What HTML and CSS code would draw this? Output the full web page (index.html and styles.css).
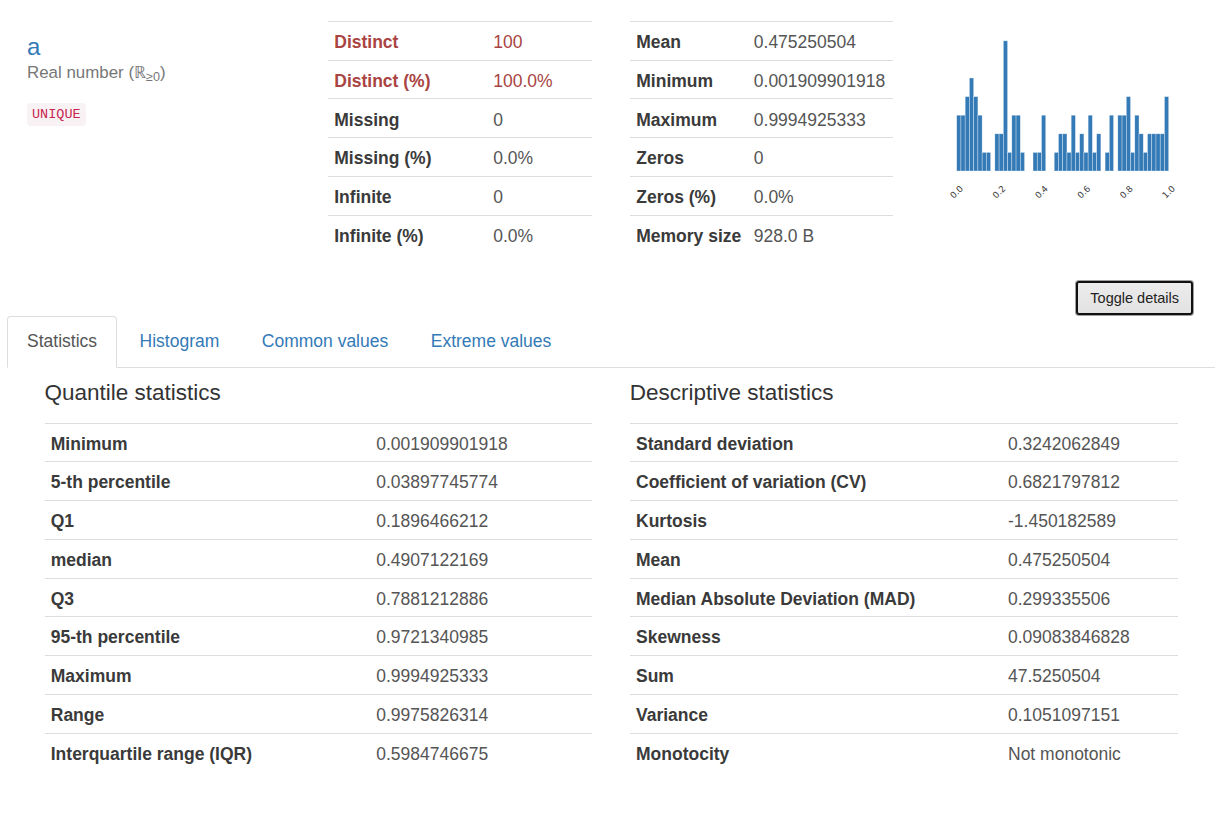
FILE: index.html
```html
<!DOCTYPE html>
<html lang="en">
<head>
<meta charset="utf-8">
<title>Variable a</title>
<link rel="stylesheet" href="styles.css">
</head>
<body>
<div class="overview">
  <div class="var-name">
    <p class="var-title"><a href="#">a</a></p>
    <p class="var-type">Real number (ℝ<sub>≥0</sub>)</p>
    <code class="badge-unique">UNIQUE</code>
  </div>
  <table class="stats t1">
    <tr class="alert"><th>Distinct</th><td>100</td></tr>
    <tr class="alert"><th>Distinct (%)</th><td>100.0%</td></tr>
    <tr><th>Missing</th><td>0</td></tr>
    <tr><th>Missing (%)</th><td>0.0%</td></tr>
    <tr><th>Infinite</th><td>0</td></tr>
    <tr><th>Infinite (%)</th><td>0.0%</td></tr>
  </table>
  <table class="stats t2">
    <tr><th>Mean</th><td>0.475250504</td></tr>
    <tr><th>Minimum</th><td>0.001909901918</td></tr>
    <tr><th>Maximum</th><td>0.9994925333</td></tr>
    <tr><th>Zeros</th><td>0</td></tr>
    <tr><th>Zeros (%)</th><td>0.0%</td></tr>
    <tr><th>Memory size</th><td>928.0 B</td></tr>
  </table>
  <svg class="mini-hist" width="260" height="180" viewBox="0 0 260 180">
    <g fill="#337ab7" stroke="#ffffff" stroke-opacity="0.55" stroke-width="0.6">
      <rect x="26.70" y="85.2" width="4.24" height="55.8"/>
      <rect x="30.94" y="85.2" width="4.24" height="55.8"/>
      <rect x="35.18" y="66.6" width="4.24" height="74.4"/>
      <rect x="39.42" y="48" width="4.24" height="93"/>
      <rect x="43.66" y="66.6" width="4.24" height="74.4"/>
      <rect x="47.90" y="85.2" width="4.24" height="55.8"/>
      <rect x="52.14" y="122.4" width="4.24" height="18.6"/>
      <rect x="56.38" y="122.4" width="4.24" height="18.6"/>
      <rect x="64.86" y="103.8" width="4.24" height="37.2"/>
      <rect x="69.10" y="103.8" width="4.24" height="37.2"/>
      <rect x="73.34" y="10.8" width="4.24" height="130.2"/>
      <rect x="77.58" y="122.4" width="4.24" height="18.6"/>
      <rect x="81.82" y="85.2" width="4.24" height="55.8"/>
      <rect x="86.06" y="85.2" width="4.24" height="55.8"/>
      <rect x="90.30" y="122.4" width="4.24" height="18.6"/>
      <rect x="103.02" y="122.4" width="4.24" height="18.6"/>
      <rect x="107.26" y="122.4" width="4.24" height="18.6"/>
      <rect x="111.50" y="85.2" width="4.24" height="55.8"/>
      <rect x="124.22" y="122.4" width="4.24" height="18.6"/>
      <rect x="128.46" y="103.8" width="4.24" height="37.2"/>
      <rect x="132.70" y="103.8" width="4.24" height="37.2"/>
      <rect x="136.94" y="122.4" width="4.24" height="18.6"/>
      <rect x="141.18" y="85.2" width="4.24" height="55.8"/>
      <rect x="145.42" y="122.4" width="4.24" height="18.6"/>
      <rect x="149.66" y="103.8" width="4.24" height="37.2"/>
      <rect x="153.90" y="122.4" width="4.24" height="18.6"/>
      <rect x="158.14" y="85.2" width="4.24" height="55.8"/>
      <rect x="162.38" y="122.4" width="4.24" height="18.6"/>
      <rect x="166.62" y="103.8" width="4.24" height="37.2"/>
      <rect x="175.10" y="122.4" width="4.24" height="18.6"/>
      <rect x="179.34" y="85.2" width="4.24" height="55.8"/>
      <rect x="187.82" y="85.2" width="4.24" height="55.8"/>
      <rect x="192.06" y="85.2" width="4.24" height="55.8"/>
      <rect x="196.30" y="66.6" width="4.24" height="74.4"/>
      <rect x="200.54" y="122.4" width="4.24" height="18.6"/>
      <rect x="204.78" y="85.2" width="4.24" height="55.8"/>
      <rect x="209.02" y="103.8" width="4.24" height="37.2"/>
      <rect x="213.26" y="122.4" width="4.24" height="18.6"/>
      <rect x="217.50" y="103.8" width="4.24" height="37.2"/>
      <rect x="221.74" y="103.8" width="4.24" height="37.2"/>
      <rect x="225.98" y="103.8" width="4.24" height="37.2"/>
      <rect x="230.22" y="103.8" width="4.24" height="37.2"/>
      <rect x="234.46" y="66.6" width="4.24" height="74.4"/>
    </g>
    <g class="axis-labels" fill="#3a3a3a" font-family="DejaVu Sans, sans-serif" font-size="8.8" text-anchor="middle">
      <text x="26.7" y="165" transform="rotate(-45 26.7 162)">0.0</text>
      <text x="69.1" y="165" transform="rotate(-45 69.1 162)">0.2</text>
      <text x="111.5" y="165" transform="rotate(-45 111.5 162)">0.4</text>
      <text x="153.9" y="165" transform="rotate(-45 153.9 162)">0.6</text>
      <text x="196.3" y="165" transform="rotate(-45 196.3 162)">0.8</text>
      <text x="238.7" y="165" transform="rotate(-45 238.7 162)">1.0</text>
    </g>
  </svg>
</div>

<div class="toggle-row">
  <button class="toggle-btn" type="button">Toggle details</button>
</div>

<ul class="tabs">
  <li><a class="active" href="#">Statistics</a></li>
  <li><a href="#">Histogram</a></li>
  <li><a href="#">Common values</a></li>
  <li><a href="#">Extreme values</a></li>
</ul>

<div class="panes">
  <div class="pane">
    <h4 class="pane-title">Quantile statistics</h4>
    <table class="stats tq">
      <tr><th>Minimum</th><td>0.001909901918</td></tr>
      <tr><th>5-th percentile</th><td>0.03897745774</td></tr>
      <tr><th>Q1</th><td>0.1896466212</td></tr>
      <tr><th>median</th><td>0.4907122169</td></tr>
      <tr><th>Q3</th><td>0.7881212886</td></tr>
      <tr><th>95-th percentile</th><td>0.9721340985</td></tr>
      <tr><th>Maximum</th><td>0.9994925333</td></tr>
      <tr><th>Range</th><td>0.9975826314</td></tr>
      <tr><th>Interquartile range (IQR)</th><td>0.5984746675</td></tr>
    </table>
  </div>
  <div class="pane">
    <h4 class="pane-title">Descriptive statistics</h4>
    <table class="stats tdsc">
      <tr><th>Standard deviation</th><td>0.3242062849</td></tr>
      <tr><th>Coefficient of variation (CV)</th><td>0.6821797812</td></tr>
      <tr><th>Kurtosis</th><td>-1.450182589</td></tr>
      <tr><th>Mean</th><td>0.475250504</td></tr>
      <tr><th>Median Absolute Deviation (MAD)</th><td>0.299335506</td></tr>
      <tr><th>Skewness</th><td>0.09083846828</td></tr>
      <tr><th>Sum</th><td>47.5250504</td></tr>
      <tr><th>Variance</th><td>0.1051097151</td></tr>
      <tr><th>Monotocity</th><td>Not monotonic</td></tr>
    </table>
  </div>
</div>
</body>
</html>
```
FILE: styles.css
```css
* { box-sizing: border-box; }

body {
  margin: 0;
  font-family: "Liberation Sans", Arial, sans-serif;
  font-size: 17.5px;
  line-height: 25px;
  color: #333;
  background: #fff;
}

/* ---------- overview row ---------- */
.overview {
  display: flex;
  align-items: flex-start;
  padding: 21px 0 0 27px;
}

.var-name { width: 301px; }

.var-title {
  margin: 13px 0 0;
  font-size: 24px;
  line-height: 26px;
}
.var-title a { color: #337ab7; text-decoration: none; }

.var-type {
  margin: 3px 0 0;
  font-size: 16.9px;
  line-height: 20px;
  color: #777;
}
.var-type sub {
  font-size: 75%;
  line-height: 0;
  vertical-align: -0.25em;
}

.badge-unique {
  display: inline-block;
  margin-top: 20px;
  padding: 2px 5px;
  font-family: "Liberation Mono", monospace;
  font-size: 13.5px;
  line-height: 19px;
  color: #c7254e;
  background: #f9f2f4;
  border-radius: 4px;
}

.stats { border-collapse: collapse; }
.stats th,
.stats td {
  padding: 8.1px 6.25px 4.65px;
  border-top: 1px solid #ddd;
  text-align: left;
  vertical-align: top;
  white-space: nowrap;
}
.stats th { font-weight: bold; color: #3a3a3a; }
.stats td { color: #555; }
.stats .alert th,
.stats .alert td { color: #a94442; }

.t1 { width: 264px; }
.t1 th { width: 159px; }
.t2 { width: 263px; margin-left: 38px; }
.t2 th { width: 117px; }

.mini-hist {
  display: block;
  margin: 9px 0 0 37px;
}

/* ---------- toggle ---------- */
.toggle-row {
  display: flex;
  justify-content: flex-end;
  padding-right: 33px;
  margin-top: 27.5px;
}
.toggle-btn {
  font-family: "Liberation Sans", Arial, sans-serif;
  font-size: 14.5px;
  line-height: 18px;
  padding: 6px 12px;
  color: #222;
  background: linear-gradient(#ececec, #e2e2e2);
  border: 2px solid #111;
  border-radius: 3px;
  box-shadow: 0 0 0 1px #a0a0a0;
}

/* ---------- tabs ---------- */
.tabs {
  display: flex;
  list-style: none;
  margin: 1px 11px 0 7px;
  padding: 0;
  border-bottom: 1px solid #ddd;
}
.tabs li { margin-bottom: -1px; }
.tabs a {
  display: block;
  margin-right: 2.5px;
  padding: 12.5px 19px;
  border: 1px solid transparent;
  border-radius: 4px 4px 0 0;
  color: #337ab7;
  text-decoration: none;
}
.tabs a.active {
  color: #555;
  background: #fff;
  border-color: #ddd #ddd transparent;
}

/* ---------- panes ---------- */
.panes {
  display: flex;
  margin-left: 44.5px;
  gap: 37.5px;
}
.pane { width: 547.75px; }

.pane-title {
  margin: 13.5px 0 16.5px;
  font-size: 22.5px;
  line-height: 24.75px;
  font-weight: normal;
  color: #333;
}

.tq, .tdsc { width: 100%; }
.tq th { width: 325.5px; }
.tdsc th { width: 372px; }
```
